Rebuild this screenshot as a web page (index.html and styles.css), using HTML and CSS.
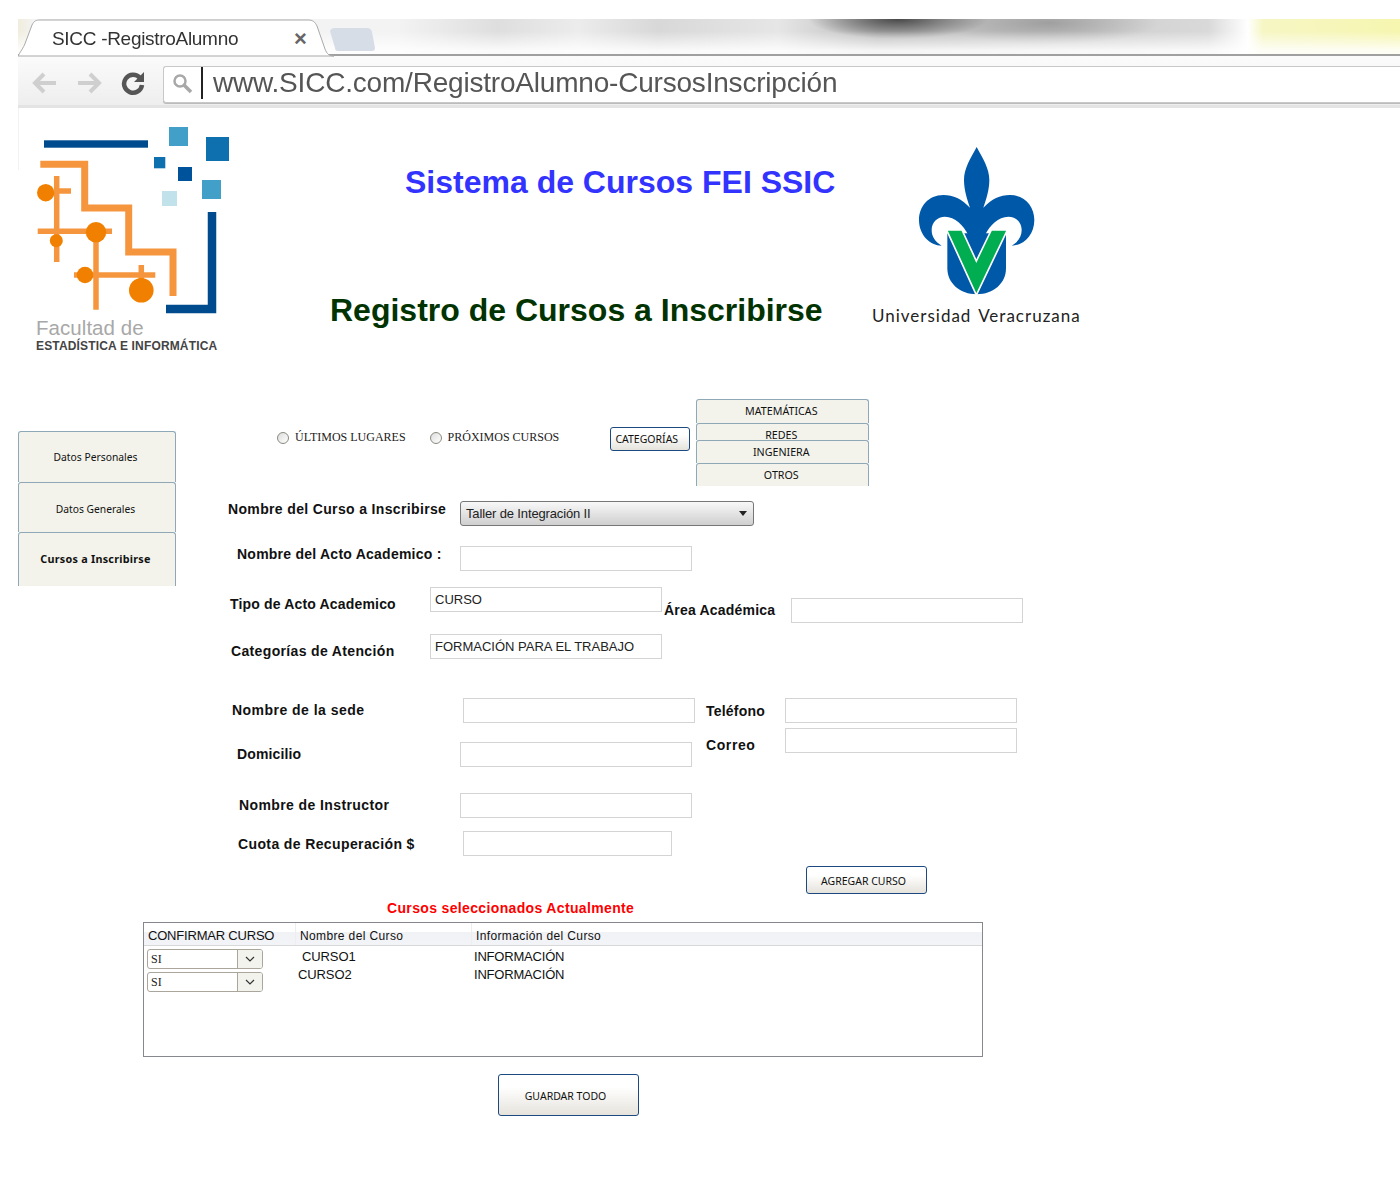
FILE: index.html
```html
<!DOCTYPE html>
<html lang="es">
<head>
<meta charset="utf-8">
<title>SICC -RegistroAlumno</title>
<link rel="stylesheet" href="styles.css">
</head>
<body>
<div class="page">
  <div class="browser">
    <div class="tabstrip">
      <svg class="tabshape" width="360" height="38" viewBox="0 0 360 38">
        <path d="M0 37 C4 30 6 28 8 22 L14 6 C16 2 18 1 22 1 L290 1 C295 1 297 3 299 7 L307 30 C309 35 311 37 316 37 Z" fill="#fff" stroke="#a9a9a9"/>
        <path d="M312 12 C313 10 314 9 317 9 L349 9 C352 9 353 10 354 13 L357 29 C357 31 356 32 354 32 L320 32 C318 32 317 31 317 29 Z" fill="#d6dde7"/>
      </svg>
      <span class="tabtitle">SICC -RegistroAlumno</span>
      <span class="tabclose">×</span>
    </div>
    <div class="toolbar">
      <svg class="navicon" width="26" height="24" viewBox="0 0 26 24"><path d="M24 12H4M12 3l-9 9 9 9" fill="none" stroke="#cfcfcf" stroke-width="4"/></svg>
      <svg class="navicon fwd" width="26" height="24" viewBox="0 0 26 24"><path d="M2 12h20M14 3l9 9-9 9" fill="none" stroke="#cfcfcf" stroke-width="4"/></svg>
      <svg class="navicon reload" width="26" height="26" viewBox="0 0 26 26"><path d="M20 8a9 9 0 1 0 2 7" fill="none" stroke="#555" stroke-width="4.5"/><path d="M24 2v10H14z" fill="#555"/></svg>
      <div class="addressbar">
        <svg class="searchicon" width="22" height="22" viewBox="0 0 22 22"><circle cx="8" cy="8" r="5.5" fill="none" stroke="#a8a8a8" stroke-width="2.5"/><path d="M12 12l7 7" stroke="#a8a8a8" stroke-width="3.5"/></svg>
        <span class="caret"></span>
        <span class="url">www.SICC.com/RegistroAlumno-CursosInscripción</span>
      </div>
    </div>
  </div>

  <header class="header">
    <div class="fei">
      <svg class="fei-mark" width="220" height="208" viewBox="18 108 220 208">
        <rect x="44" y="140.300" width="104" height="7.400" fill="#004b8d"/>
        <rect x="169" y="127" width="19" height="19" fill="#42a0c8"/>
        <rect x="206" y="137" width="23" height="24" fill="#0f70b0"/>
        <rect x="154" y="157" width="11.300" height="11.300" fill="#0f70b0"/>
        <rect x="178" y="167" width="14" height="14" fill="#00529b"/>
        <rect x="202" y="180" width="19" height="19" fill="#42a0c8"/>
        <rect x="162" y="191" width="15" height="15" fill="#c1e2ea"/>
        <path d="M212 212V309H166" fill="none" stroke="#004b8d" stroke-width="8.500"/>
        <g fill="none" stroke="#f5963f">
          <path d="M40.300 164.300H84.700V208H128.700V252H173V296" stroke-width="7"/>
          <path d="M56.700 176V262M56.700 191H71M37.700 231.300H112M96 232V309.700M74 275H155.300M141.300 265V292" stroke-width="5.500"/>
        </g>
        <g fill="#f18000">
          <circle cx="45.700" cy="192.700" r="8.700"/>
          <circle cx="96" cy="232.300" r="10.300"/>
          <circle cx="56.300" cy="240.700" r="6.500"/>
          <circle cx="85" cy="275" r="8.300"/>
          <circle cx="141.300" cy="290.300" r="12.300"/>
        </g>
      </svg>
      <div class="fei-name">Facultad de</div>
      <div class="fei-sub">ESTADÍSTICA E INFORMÁTICA</div>
    </div>
    <div class="titles">
      <h1 class="title-main">Sistema de Cursos FEI SSIC</h1>
      <h2 class="title-sub">Registro de Cursos a Inscribirse</h2>
    </div>
    <div class="uv">
      <svg class="uv-mark" width="240" height="165" viewBox="0 0 720 495">
        <path fill="#0058a8" d="M350 36C332 70 312 100 312 135C312 165 322 195 330 218C305 192 280 180 250 180C205 180 177 215 177 255C177 300 210 332 245 332C225 320 215 305 215 285C215 262 232 245 255 245C285 245 310 270 325 300L350 380L375 300C390 270 415 245 445 245C468 245 485 262 485 285C485 305 475 320 455 332C490 332 523 300 523 255C523 215 495 180 450 180C420 180 395 192 370 218C378 195 388 165 388 135C388 100 368 70 350 36Z"/>
        <path fill="#0058a8" d="M262 295V400C262 445 300 478 350 478C400 478 438 445 438 400V295Z"/>
        <path fill="#00ad50" stroke="#fff" stroke-width="5" d="M260 285H306L349 378L394 285H442L349 480Z"/>
      </svg>
      <div class="uv-name">Universidad Veracruzana</div>
    </div>
  </header>

  <main class="main">
    <nav class="sidetabs">
      <div class="sidetab">Datos Personales</div>
      <div class="sidetab tab-gen">Datos Generales</div>
      <div class="sidetab active">Cursos a Inscribirse</div>
    </nav>
    <form class="content">
      <div class="options">
        <label class="radio first"><input type="radio" name="f"><span>ÚLTIMOS LUGARES</span></label>
        <label class="radio"><input type="radio" name="f"><span>PRÓXIMOS CURSOS</span></label>
        <button type="button" class="btn btn-cat">CATEGORÍAS</button>
        <div class="cattabs">
          <div class="cattab t1">MATEMÁTICAS</div>
          <div class="cattab t2">REDES</div>
          <div class="cattab t3">INGENIERA</div>
          <div class="cattab t4">OTROS</div>
        </div>
      </div>

      <div class="row r-curso">
        <label class="lbl">Nombre del Curso a Inscribirse</label>
        <div class="select"><span>Taller de Integración II</span><i class="arrow"></i></div>
      </div>
      <div class="row r-acto">
        <label class="lbl">Nombre del Acto Academico :</label>
        <input class="field" type="text">
      </div>
      <div class="row r-tipo">
        <label class="lbl">Tipo de Acto Academico</label>
        <input class="field" type="text" value="CURSO">
        <label class="lbl lbl-area">Área Académica</label>
        <input class="field field-area" type="text">
      </div>
      <div class="row r-cat">
        <label class="lbl">Categorías de Atención</label>
        <input class="field" type="text" value="FORMACIÓN PARA EL TRABAJO">
      </div>
      <div class="row r-sede">
        <label class="lbl">Nombre de la sede</label>
        <input class="field" type="text">
        <label class="lbl lbl-tel">Teléfono</label>
        <input class="field" type="text">
      </div>
      <div class="row r-dom">
        <label class="lbl">Domicilio</label>
        <input class="field field-dom" type="text">
        <label class="lbl lbl-tel">Correo</label>
        <input class="field" type="text">
      </div>
      <div class="row r-inst">
        <label class="lbl">Nombre de Instructor</label>
        <input class="field" type="text">
      </div>
      <div class="row r-cuota">
        <label class="lbl">Cuota de Recuperación $</label>
        <input class="field field-cuota" type="text">
      </div>
      <button type="button" class="btn btn-add">AGREGAR CURSO</button>
    </form>
  </main>

  <div class="sel-title">Cursos seleccionados Actualmente</div>
  <section class="grid">
    <div class="grid-head">
      <div class="gh gh1">CONFIRMAR CURSO</div>
      <div class="gh gh2">Nombre del Curso</div>
      <div class="gh gh3">Información del Curso</div>
    </div>
    <div class="grid-body">
      <div class="confirm">
        <div class="combo"><span>SI</span><i class="combo-btn"><svg width="10" height="6" viewBox="0 0 10 6"><path d="M1 1l4 4 4-4" fill="none" stroke="#333" stroke-width="1.200"/></svg></i></div>
        <div class="combo"><span>SI</span><i class="combo-btn"><svg width="10" height="6" viewBox="0 0 10 6"><path d="M1 1l4 4 4-4" fill="none" stroke="#333" stroke-width="1.200"/></svg></i></div>
      </div>
      <div class="names">
        <div class="name1">CURSO1</div>
        <div class="name2">CURSO2</div>
      </div>
      <div class="infos">
        <div>INFORMACIÓN</div>
        <div>INFORMACIÓN</div>
      </div>
    </div>
  </section>
  <button type="button" class="btn btn-save">GUARDAR TODO</button>
</div>
</body>
</html>
```
FILE: styles.css
```css
* { box-sizing: border-box; }
html, body { margin: 0; padding: 0; background: #fff; }
body { font-family: "Liberation Sans", Arial, sans-serif; color: #000; }
.page { width: 1400px; height: 1200px; overflow: hidden; }

/* browser chrome */
.browser { margin: 19px 0 0 18px; width: 1382px; height: 89px; }
.tabstrip {
  position: relative;
  height: 37px;
  border-bottom: 2px solid #a0a0a0;
  background:
    linear-gradient(rgba(255,255,255,0) 35%, rgba(255,255,255,.85) 90%),
    radial-gradient(ellipse 90px 20px at 880px 0, rgba(60,60,60,.9), rgba(90,90,90,0) 100%),
    radial-gradient(ellipse 110px 22px at 1030px 4px, rgba(130,130,130,.6), rgba(150,150,150,0) 100%),
    linear-gradient(90deg, #f0eddc 0, #f3f3f3 16px, #f3f3f3 380px, #dedede 480px, #ececec 560px, #d8d8d8 640px, #e6e6e6 760px, #bbb 860px, #c8c8c8 1000px, #d9d9d9 1190px, #fff 1230px, #f6f6c4 1245px, #f6f6b0 1382px);
}
.tabshape { position: absolute; left: 0; top: 0; }
.tabtitle { position: absolute; left: 34px; top: 9px; font-size: 19px; letter-spacing: -.3px; color: #333; filter: blur(.3px); }
.tabclose { position: absolute; left: 276px; top: 7px; font-size: 22px; font-weight: bold; color: #666; }
.toolbar {
  display: flex;
  align-items: flex-start;
  height: 52px;
  padding-top: 10px;
  background: linear-gradient(#fbfbfb, #eeeeee);
  border-bottom: 3px solid #e3e3e3;
}
.navicon { margin: 5px 0 0 14px; flex: none; }
.navicon.fwd { margin-left: 18px; }
.navicon.reload { margin: 4px 0 0 18px; }
.addressbar {
  display: flex;
  align-items: flex-start;
  margin-left: 17px;
  flex: 1;
  height: 37px;
  background: #fff;
  border: 1px solid #c8c8c8;
  border-right: 0;
  border-radius: 3px 0 0 3px;
  box-shadow: 0 1px 0 #bbb;
}
.searchicon { margin: 6px 0 0 8px; flex: none; }
.caret { width: 2px; height: 32px; margin: 0 0 0 7px; background: #222; flex: none; }
.url { margin-left: 10px; font-size: 28px; line-height: 31px; letter-spacing: -.2px; color: #555; filter: blur(.3px); white-space: nowrap; }

/* header */
.header { display: flex; height: 291px; }
.fei {
  width: 220px;
  margin-left: 18px;
  flex: none;
  background: linear-gradient(#f2f2f2, #f2f2f2) 0 0 / 1px 62px no-repeat;
}
.fei-mark { display: block; }
.fei-name { margin: 0 0 0 18px; font-size: 20.500px; line-height: 23px; letter-spacing: .05px; color: #a8a8a8; }
.fei-sub { margin-left: 18px; font-size: 12px; line-height: 14px; font-weight: bold; letter-spacing: .16px; color: #444; white-space: nowrap; }
.titles { width: 622px; flex: none; }
.title-main { margin: 55px 0 0 167px; font-size: 32px; line-height: 38px; font-weight: bold; color: #3333ff; white-space: nowrap; }
.title-sub { margin: 90px 0 0 92px; font-size: 32px; line-height: 38px; font-weight: bold; color: #003300; white-space: nowrap; }
.uv { flex: none; width: 240px; margin-top: 27px; }
.uv-mark { display: block; }
.uv-name { margin: 5px 0 0 12px; font-family: "Lato", sans-serif; font-size: 17px; line-height: 22px; letter-spacing: 1px; word-spacing: 2px; color: #222; white-space: nowrap; }

/* main */
.main { display: flex; height: 495px; }
.sidetabs { width: 158px; margin: 32px 0 0 18px; flex: none; }
.sidetab {
  display: flex;
  align-items: center;
  justify-content: center;
  height: 51px;
  padding-right: 3px;
  font-family: "Noto Sans", sans-serif;
  font-size: 10.300px;
  color: #111;
  background: #f3f3eb;
  border: 1px solid #8fa8b8;
  border-bottom: 0;
  border-radius: 3px 3px 0 0;
}
.sidetab.tab-gen { height: 50px; padding-top: 2px; }
.sidetab.active { height: 54px; padding-bottom: 3px; font-weight: bold; font-size: 10.800px; letter-spacing: .25px; }
.content { flex: 1; }
.options { display: flex; align-items: flex-start; height: 87px; }
.radio { display: flex; align-items: center; margin-top: 31px; height: 15px; font-family: "Liberation Serif", serif; font-size: 12px; color: #222; white-space: nowrap; }
.radio.first { margin-left: 101px; }
.radio + .radio { margin-left: 24px; }
.radio input {
  appearance: none;
  width: 12px;
  height: 12px;
  margin: 0 6px 0 0;
  border: 1px solid #8a8a80;
  border-radius: 50%;
  background: linear-gradient(135deg, #ddd, #fff);
}
.btn {
  display: block;
  padding: 2px 6px 0 0;
  font-family: "Noto Sans", sans-serif;
  font-size: 10.500px;
  color: #111;
  border: 1px solid #1c4a80;
  border-radius: 3px;
  background: linear-gradient(#fff 30%, #e6e3dc);
}
.btn-cat { width: 80px; height: 24px; margin: 28px 0 0 51px; padding: 0 7px 0 0; }
.cattabs { width: 173px; margin-left: 6px; height: 87px; flex: none; }
.cattab {
  height: 24px;
  padding-right: 3px;
  text-align: center;
  font-family: "Noto Sans", sans-serif;
  font-size: 10.700px;
  line-height: 22px;
  color: #111;
  background: #f3f3eb;
  border: 1px solid #8fa8b8;
  border-bottom: 0;
  border-radius: 3px 3px 0 0;
}
.cattab.t2 { height: 17px; padding-top: 4px; line-height: 14px; }
.cattab.t3 { height: 23px; line-height: 22px; position: relative; }
.cattab.t4 { height: 23px; }

.row { display: flex; align-items: flex-start; }
.lbl { display: block; flex: none; font-size: 14px; line-height: 16px; font-weight: bold; letter-spacing: .35px; color: #111; white-space: nowrap; }
.field {
  display: block;
  flex: none;
  width: 232px;
  height: 25px;
  padding: 0 4px;
  margin: 0;
  font-family: "Liberation Sans", sans-serif;
  font-size: 13px;
  color: #222;
  background: #fff;
  border: 1px solid #d4d4d4;
  outline: 0;
}
.r-curso { margin-top: 15px; }
.r-curso .lbl { margin-left: 52px; width: 232px; }
.select {
  display: flex;
  align-items: center;
  justify-content: space-between;
  width: 294px;
  height: 25px;
  padding: 0 5px;
  font-size: 13px;
  letter-spacing: -.14px;
  color: #222;
  border: 1px solid #777;
  border-radius: 3px;
  background: linear-gradient(#f8f8f8, #cfcfcf);
}
.arrow { width: 0; height: 0; margin-right: 1px; border: 4px solid transparent; border-top: 5px solid #222; border-bottom: 0; }
.r-acto { margin-top: 20px; }
.r-acto .lbl { margin-left: 61px; width: 223px; letter-spacing: .24px; }
.r-tipo { margin-top: 16px; }
.r-tipo > .lbl:first-child { margin: 9px 0 0 54px; width: 200px; letter-spacing: .17px; }
.lbl-area { margin: 15px 0 0 2px; width: 127px; letter-spacing: .2px; }
.field-area { margin-top: 11px; }
.r-cat { margin-top: 11px; }
.r-cat .lbl { margin: 9px 0 0 55px; width: 199px; }
.r-sede { margin-top: 39px; }
.r-sede > .lbl:first-child { margin: 4px 0 0 56px; width: 231px; letter-spacing: .47px; }
.lbl-tel { margin: 5px 0 0 11px; width: 79px; letter-spacing: .22px; }
.r-dom { margin-top: 5px; }
.r-dom > .lbl:first-child { margin: 18px 0 0 61px; width: 223px; letter-spacing: .12px; }
.field-dom { margin-top: 14px; }
.r-dom .lbl-tel { margin: 9px 0 0 14px; letter-spacing: .6px; }
.r-inst { margin-top: 26px; }
.r-inst .lbl { margin: 4px 0 0 63px; width: 221px; letter-spacing: .4px; }
.r-cuota { margin-top: 13px; }
.r-cuota .lbl { margin: 5px 0 0 62px; width: 225px; letter-spacing: .38px; }
.field-cuota { width: 209px; }
.btn-add { width: 121px; height: 28px; margin: 10px 0 0 630px; }

/* selected courses */
.sel-title { margin: 6px 0 0 387px; font-size: 14px; line-height: 16px; font-weight: bold; letter-spacing: .35px; color: #f00; }
.grid { width: 840px; height: 135px; margin: 6px 0 0 143px; border: 1px solid #85888c; }
.grid-head {
  display: flex;
  height: 23px;
  border-bottom: 1px solid #d8d8d8;
  background: linear-gradient(#fff 40%, #f1f2f5 42%, #f3f4f7);
}
.gh { padding: 5px 0 0 4px; font-size: 12px; line-height: 16px; letter-spacing: .37px; color: #111; white-space: nowrap; border-right: 1px solid #eee; }
.gh1 { width: 152px; font-size: 13px; letter-spacing: -.2px; }
.gh2 { width: 176px; }
.gh3 { border: 0; }
.grid-body { display: flex; align-items: flex-start; }
.confirm { width: 154px; padding: 3px 0 0 3px; flex: none; }
.combo {
  display: flex;
  justify-content: space-between;
  width: 116px;
  height: 20px;
  margin-bottom: 3px;
  font-family: "Liberation Serif", serif;
  font-size: 12px;
  line-height: 18px;
  color: #222;
  border: 1px solid #aaa69c;
  border-radius: 3px;
}
.combo span { padding-left: 3px; }
.combo-btn { display: flex; align-items: center; justify-content: center; width: 25px; border-left: 1px solid #aaa69c; background: #f3f3ee; border-radius: 0 2px 2px 0; }
.names, .infos { font-size: 13px; line-height: 18px; letter-spacing: -.2px; color: #111; flex: none; padding-top: 2px; }
.names { width: 176px; letter-spacing: -.1px; }
.name1 { padding-left: 4px; }
.btn-save { width: 141px; height: 42px; margin: 17px 0 0 498px; }
```
